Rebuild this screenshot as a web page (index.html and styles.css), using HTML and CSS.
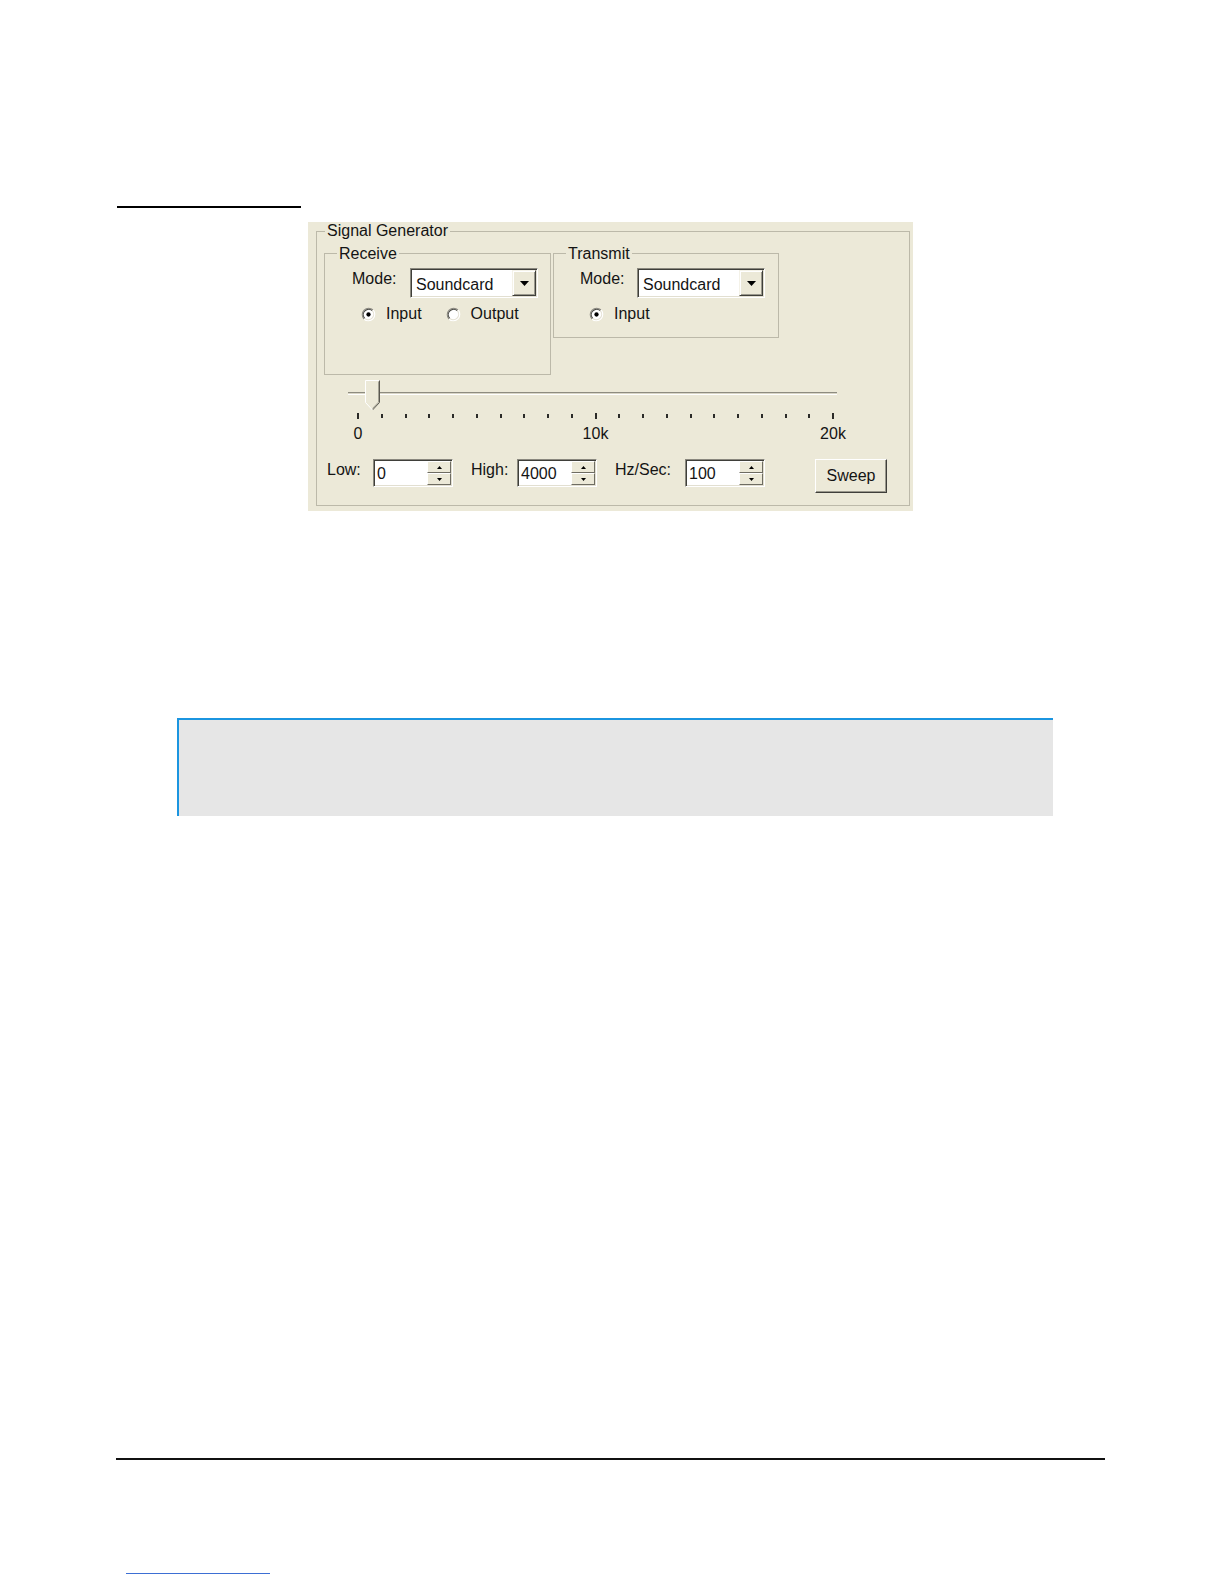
FILE: index.html
```html
<!DOCTYPE html>
<html>
<head>
<meta charset="utf-8">
<title>Signal Generator</title>
<link rel="stylesheet" href="styles.css">
</head>
<body>
<div class="page">
  <div class="rule-top"></div>

  <div class="panel">
    <fieldset class="group outer">
      <legend class="lg-outer">Signal Generator</legend>

      <div class="groups">
        <fieldset class="group rx">
          <legend class="lg-inner lg-rx">Receive</legend>
          <div class="mode mode-rx">
            <span class="mode-label">Mode:</span>
            <div class="combo">
              <span class="combo-text">Soundcard</span>
              <span class="combo-btn"><svg width="9" height="5" viewBox="0 0 9 5"><polygon points="0,0 9,0 4.5,5" fill="#000"/></svg></span>
            </div>
          </div>
          <div class="radios radios-rx">
            <label class="radio">
              <svg class="rd" width="15" height="15" viewBox="0 0 14 14">
                <circle cx="7" cy="7" r="6" fill="#fff"/>
                <path d="M2.76 11.24 A6 6 0 0 1 11.24 2.76" fill="none" stroke="#8c8a80" stroke-width="1"/>
                <path d="M3.47 10.53 A5 5 0 0 1 10.53 3.47" fill="none" stroke="#4a4a44" stroke-width="1"/>
                <path d="M11.24 2.76 A6 6 0 0 1 2.76 11.24" fill="none" stroke="#ffffff" stroke-width="1"/>
                <path d="M10.53 3.47 A5 5 0 0 1 3.47 10.53" fill="none" stroke="#e4e1d3" stroke-width="1"/>
                <circle cx="7" cy="7" r="2" fill="#000"/>
              </svg>
              <span>Input</span>
            </label>
            <label class="radio radio-2">
              <svg class="rd" width="15" height="15" viewBox="0 0 14 14">
                <circle cx="7" cy="7" r="6" fill="#fff"/>
                <path d="M2.76 11.24 A6 6 0 0 1 11.24 2.76" fill="none" stroke="#8c8a80" stroke-width="1"/>
                <path d="M3.47 10.53 A5 5 0 0 1 10.53 3.47" fill="none" stroke="#4a4a44" stroke-width="1"/>
                <path d="M11.24 2.76 A6 6 0 0 1 2.76 11.24" fill="none" stroke="#ffffff" stroke-width="1"/>
                <path d="M10.53 3.47 A5 5 0 0 1 3.47 10.53" fill="none" stroke="#e4e1d3" stroke-width="1"/>
              </svg>
              <span>Output</span>
            </label>
          </div>
        </fieldset>

        <fieldset class="group tx">
          <legend class="lg-inner lg-tx">Transmit</legend>
          <div class="mode mode-tx">
            <span class="mode-label mode-label-tx">Mode:</span>
            <div class="combo">
              <span class="combo-text">Soundcard</span>
              <span class="combo-btn"><svg width="9" height="5" viewBox="0 0 9 5"><polygon points="0,0 9,0 4.5,5" fill="#000"/></svg></span>
            </div>
          </div>
          <div class="radios radios-tx">
            <label class="radio">
              <svg class="rd" width="15" height="15" viewBox="0 0 14 14">
                <circle cx="7" cy="7" r="6" fill="#fff"/>
                <path d="M2.76 11.24 A6 6 0 0 1 11.24 2.76" fill="none" stroke="#8c8a80" stroke-width="1"/>
                <path d="M3.47 10.53 A5 5 0 0 1 10.53 3.47" fill="none" stroke="#4a4a44" stroke-width="1"/>
                <path d="M11.24 2.76 A6 6 0 0 1 2.76 11.24" fill="none" stroke="#ffffff" stroke-width="1"/>
                <path d="M10.53 3.47 A5 5 0 0 1 3.47 10.53" fill="none" stroke="#e4e1d3" stroke-width="1"/>
                <circle cx="7" cy="7" r="2" fill="#000"/>
              </svg>
              <span>Input</span>
            </label>
          </div>
        </fieldset>
      </div>

      <div class="slider">
        <div class="track"></div>
        <svg class="thumb" width="16" height="31" viewBox="0 0 16 31">
          <polygon points="0.5,0.5 14.5,0.5 14.5,22.5 7.5,30 0.5,22.5" fill="#ece9d8"/>
          <polyline points="0.5,22.5 0.5,0.5 14.5,0.5" fill="none" stroke="#ffffff" stroke-width="1"/>
          <polyline points="14.5,0.5 14.5,22.5 7.5,30" fill="none" stroke="#5a5850" stroke-width="1"/>
          <polyline points="13.5,1.5 13.5,22.1 7.5,28.5" fill="none" stroke="#a3a194" stroke-width="1"/>
          <line x1="0.5" y1="22.5" x2="7.5" y2="30" stroke="#ffffff" stroke-width="1"/>
        </svg>
      </div>

      <div class="ticks">
        <span class="tick long"></span><span class="tick"></span><span class="tick"></span><span class="tick"></span><span class="tick"></span><span class="tick"></span><span class="tick"></span><span class="tick"></span><span class="tick"></span><span class="tick"></span><span class="tick long"></span><span class="tick"></span><span class="tick"></span><span class="tick"></span><span class="tick"></span><span class="tick"></span><span class="tick"></span><span class="tick"></span><span class="tick"></span><span class="tick"></span><span class="tick long"></span>
      </div>

      <div class="scale">
        <span>0</span><span>10k</span><span>20k</span>
      </div>

      <div class="params">
        <span class="plabel pl-low">Low:</span>
        <div class="spin">
          <span class="spin-val">0</span>
          <span class="spin-btns">
            <span class="spin-btn"><svg width="5" height="3" viewBox="0 0 5 3"><polygon points="2.5,0 5,3 0,3" fill="#000"/></svg></span>
            <span class="spin-btn"><svg width="5" height="3" viewBox="0 0 5 3"><polygon points="0,0 5,0 2.5,3" fill="#000"/></svg></span>
          </span>
        </div>
        <span class="plabel pl-high">High:</span>
        <div class="spin">
          <span class="spin-val">4000</span>
          <span class="spin-btns">
            <span class="spin-btn"><svg width="5" height="3" viewBox="0 0 5 3"><polygon points="2.5,0 5,3 0,3" fill="#000"/></svg></span>
            <span class="spin-btn"><svg width="5" height="3" viewBox="0 0 5 3"><polygon points="0,0 5,0 2.5,3" fill="#000"/></svg></span>
          </span>
        </div>
        <span class="plabel pl-hz">Hz/Sec:</span>
        <div class="spin">
          <span class="spin-val">100</span>
          <span class="spin-btns">
            <span class="spin-btn"><svg width="5" height="3" viewBox="0 0 5 3"><polygon points="2.5,0 5,3 0,3" fill="#000"/></svg></span>
            <span class="spin-btn"><svg width="5" height="3" viewBox="0 0 5 3"><polygon points="0,0 5,0 2.5,3" fill="#000"/></svg></span>
          </span>
        </div>
        <div class="sweep">Sweep</div>
      </div>
    </fieldset>
  </div>

  <div class="note"></div>

  <div class="rule-bottom"></div>
  <div class="link-line"></div>
</div>
</body>
</html>
```

FILE: styles.css
```css
* {
  box-sizing: border-box;
}

html, body {
  margin: 0;
  padding: 0;
  background: #ffffff;
}

body {
  font-family: "Liberation Sans", Arial, sans-serif;
}

.page {
  padding-top: 206px;
  height: 1584px;
  overflow: hidden;
}

.rule-top {
  margin-left: 117px;
  width: 184px;
  height: 2px;
  background: #000;
}

/* ---------- dialog panel ---------- */
.panel {
  margin: 14px 0 0 308px;
  width: 605px;
  height: 289px;
  background: #ece9d8;
  padding: 0 3px 0 8px;
  font-size: 16px;
  color: #141414;
  overflow: hidden;
}

fieldset.group {
  margin: 0;
  padding: 0;
  min-width: 0;
  border: 1px solid #bcb9a9;
}

legend {
  padding: 0 2px;
  line-height: 18px;
}

.lg-inner {
  padding-top: 2px;
}

.outer {
  height: 284px;
}

.lg-outer {
  margin-left: 8px;
}

.groups {
  display: flex;
  align-items: flex-start;
  margin: 3px 0 0 7px;
}

.rx {
  width: 227px;
  padding-bottom: 51px !important;
}

.tx {
  width: 226px;
  margin-left: 2px !important;
  padding-bottom: 14px !important;
}

.lg-rx {
  margin-left: 12px;
}

.lg-tx {
  margin-left: 12px;
}

.mode {
  display: flex;
  align-items: flex-start;
  margin-top: 5px;
}

.mode-rx {
  padding-left: 27px;
}

.mode-tx {
  padding-left: 26px;
}

.mode-label {
  width: 58px;
  line-height: 18px;
  padding-top: 2px;
}

.mode-label-tx {
  width: 57px;
}

.combo {
  width: 128px;
  height: 30px;
  background: #fff;
  border-top: 1px solid #8a887e;
  border-left: 1px solid #8a887e;
  border-right: 1px solid #ffffff;
  border-bottom: 1px solid #ffffff;
  box-shadow: inset 1px 1px 0 #3f3f3a, inset -1px -1px 0 #e2dfd1;
  display: flex;
  align-items: center;
  justify-content: space-between;
  padding: 1px 1px 1px 5px;
}

.combo-text {
  line-height: 18px;
  padding-top: 3px;
}

.combo-btn {
  width: 24px;
  height: 26px;
  background: #ece9d8;
  border-top: 1px solid #f4f2e8;
  border-left: 1px solid #f4f2e8;
  border-right: 1px solid #3f3f3a;
  border-bottom: 1px solid #3f3f3a;
  box-shadow: inset 1px 1px 0 #ffffff, inset -1px -1px 0 #9a988c;
  display: flex;
  align-items: center;
  justify-content: center;
}

.radios {
  display: flex;
  align-items: center;
  height: 18px;
  margin-top: 7px;
  line-height: 18px;
}

.radios-rx {
  padding-left: 36px;
}

.radios-tx {
  padding-left: 35px;
}

.radio {
  display: flex;
  align-items: center;
  gap: 10px;
}

.radio-2 {
  margin-left: 24px;
}

.rd {
  display: block;
}

/* ---------- slider ---------- */
.slider {
  position: relative;
  margin: 5px 0 0 31px;
  width: 489px;
  height: 31px;
  padding-top: 12px;
}

.track {
  height: 3px;
  background: #d8d5c6;
  border-top: 1px solid #8e8c80;
  border-bottom: 1px solid #ffffff;
}

.thumb {
  position: absolute;
  left: 17px;
  top: 0;
  display: block;
}

.ticks {
  display: flex;
  justify-content: space-between;
  align-items: flex-start;
  margin: 2px 0 0 40px;
  width: 477px;
  height: 7px;
}

.tick {
  width: 2px;
  height: 4px;
  margin-top: 1px;
  background: #2b2b28;
}

.tick.long {
  height: 6px;
  margin-top: 0;
}

.scale {
  display: flex;
  justify-content: space-between;
  margin: 5px 0 0 21px;
  width: 515px;
  line-height: 18px;
}

.scale span {
  width: 40px;
  text-align: center;
}

/* ---------- parameter row ---------- */
.params {
  display: flex;
  align-items: flex-start;
  margin: 16px 0 0 10px;
}

.plabel {
  line-height: 18px;
  padding-top: 2px;
}

.pl-low {
  width: 46px;
}

.pl-high {
  width: 46px;
  margin-left: 18px;
}

.pl-hz {
  width: 70px;
  margin-left: 18px;
}

.spin {
  width: 80px;
  height: 28px;
  background: #fff;
  border-top: 1px solid #8a887e;
  border-left: 1px solid #8a887e;
  border-right: 1px solid #ffffff;
  border-bottom: 1px solid #ffffff;
  box-shadow: inset 1px 1px 0 #3f3f3a, inset -1px -1px 0 #e2dfd1;
  display: flex;
  padding: 1px;
}

.spin-val {
  flex: 1;
  line-height: 18px;
  padding: 4px 0 0 2px;
}

.spin-btns {
  width: 24px;
  display: flex;
  flex-direction: column;
}

.spin-btn {
  flex: 1;
  background: #ece9d8;
  border-top: 1px solid #ffffff;
  border-left: 1px solid #ffffff;
  border-right: 1px solid #6e6c62;
  border-bottom: 1px solid #6e6c62;
  display: flex;
  align-items: center;
  justify-content: center;
}

.spin-btn svg {
  display: block;
}

.sweep {
  margin-left: 50px;
  width: 72px;
  height: 34px;
  background: #ece9d8;
  border-top: 1px solid #ffffff;
  border-left: 1px solid #ffffff;
  border-right: 1px solid #3f3f3a;
  border-bottom: 1px solid #3f3f3a;
  box-shadow: inset -1px -1px 0 #9a988c;
  display: flex;
  align-items: center;
  justify-content: center;
  line-height: 18px;
}

/* ---------- note box ---------- */
.note {
  margin: 207px 0 0 177px;
  width: 876px;
  height: 98px;
  background: #e6e6e6;
  border-top: 2px solid #1b95e0;
  border-left: 2px solid #1b95e0;
}

.rule-bottom {
  margin: 642px 0 0 116px;
  width: 989px;
  height: 2px;
  background: #111;
}

.link-line {
  margin: 113px 0 0 126px;
  width: 144px;
  height: 1px;
  background: #3d6fd4;
}
```
